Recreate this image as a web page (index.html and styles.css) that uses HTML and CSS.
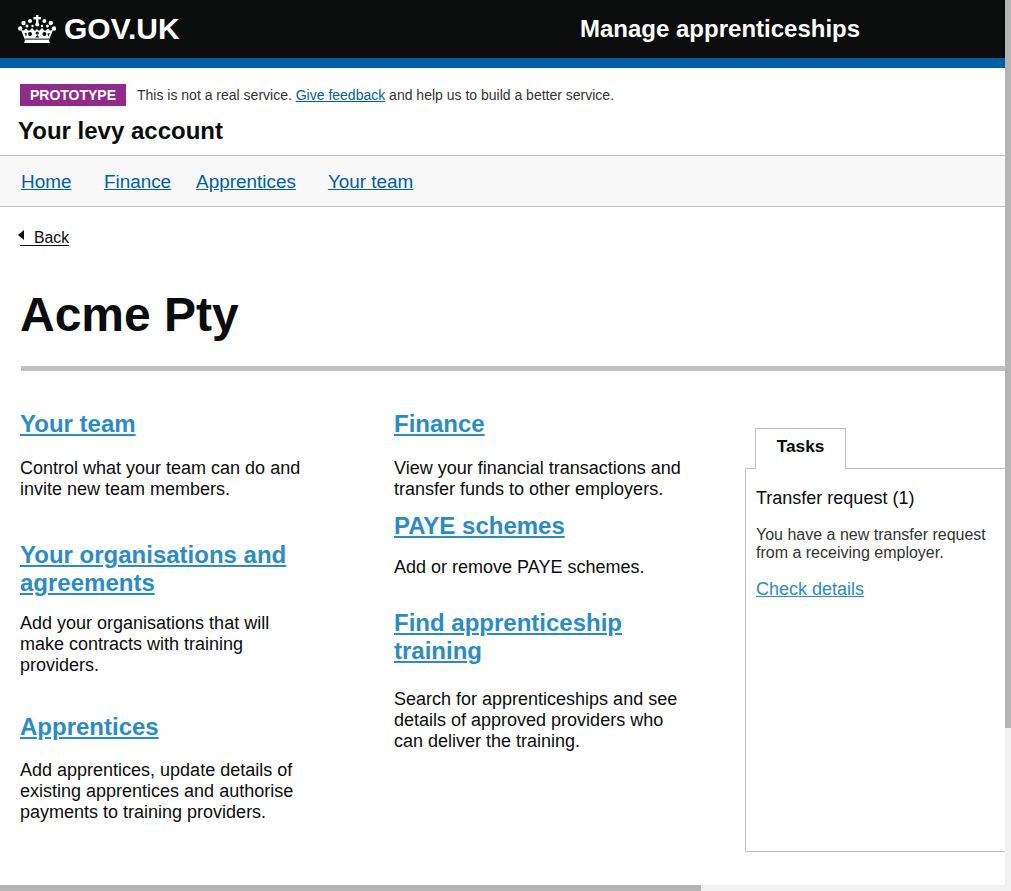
FILE: index.html
```html
<!DOCTYPE html>
<html lang="en">
<head>
<meta charset="utf-8">
<title>Acme Pty</title>
<link rel="stylesheet" href="styles.css">
</head>
<body>
<div class="window">
  <div class="viewport">
    <header class="topbar">
      <a class="logo" href="#">
        <svg class="crown" viewBox="0 0 38 28" width="38" height="28" aria-hidden="true">
          <g fill="#fff">
            <rect x="18" y="0" width="2.4" height="8"/>
            <rect x="15.5" y="2" width="7.4" height="2.4"/>
            <circle cx="19.2" cy="9.5" r="2"/>
            <circle cx="12" cy="6" r="2"/>
            <circle cx="26.4" cy="6" r="2"/>
            <circle cx="5.5" cy="8" r="2.2"/>
            <circle cx="32.8" cy="8" r="2.2"/>
            <circle cx="2.2" cy="13.5" r="2.2"/>
            <circle cx="36" cy="13.500" r="2.2"/>
            <circle cx="9" cy="11" r="1.5"/>
            <circle cx="29.4" cy="11" r="1.5"/>
            <circle cx="14.500" cy="11" r="1.2"/>
            <circle cx="24" cy="11" r="1.2"/>
            <path d="M3 15l3 0.500 2-2 3 2.500 3-3 3 3 2-2 2 2 3-3 3 3 3-2.500 2 2 3-0.500-4 10 0.800 3H6.200l0.800-3z"/>
          </g>
          <g fill="#0b0c0c">
            <circle cx="12" cy="19" r="2"/>
            <circle cx="26.400" cy="19" r="2"/>
            <circle cx="19.200" cy="18" r="1.600"/>
            <path d="M17 22.500h4.400l-2.200-2.500z"/>
            <path d="M6.500 18l2.500 0.500-1 3z"/>
            <path d="M31.900 18l-2.500 0.500 1 3z"/>
            <rect x="7" y="23.600" width="24.400" height="1"/>
          </g>
        </svg>
        <span class="logo-text">GOV.UK</span>
      </a>
      <div class="service">Manage apprenticeships</div>
    </header>
    <div class="blue-bar"></div>
    <div class="phase">
      <strong class="tag">PROTOTYPE</strong>
      <span class="phase-text">This is not a real service. <a href="#">Give feedback</a> and help us to build a better service.</span>
    </div>
    <div class="account">Your levy account</div>
    <nav class="nav">
      <a class="nav-home" href="#">Home</a>
      <a class="nav-finance" href="#">Finance</a>
      <a class="nav-apprentices" href="#">Apprentices</a>
      <a href="#">Your team</a>
    </nav>
    <a class="back" href="#"><span class="back-arrow"></span><span class="back-label">Back</span></a>
    <h1 class="title">Acme Pty</h1>
    <hr class="rule">
    <main class="columns">
      <div class="col col-one">
        <section class="item item-team">
          <h2><a href="#">Your team</a></h2>
          <p>Control what your team can do and invite new team members.</p>
        </section>
        <section class="item item-orgs">
          <h2><a href="#">Your organisations and agreements</a></h2>
          <p>Add your organisations that will make contracts with training providers.</p>
        </section>
        <section class="item item-apprentices">
          <h2><a href="#">Apprentices</a></h2>
          <p>Add apprentices, update details of existing apprentices and authorise payments to training providers.</p>
        </section>
      </div>
      <div class="col col-two">
        <section class="item item-finance">
          <h2><a href="#">Finance</a></h2>
          <p>View your financial transactions and transfer funds to other employers.</p>
        </section>
        <section class="item item-paye">
          <h2><a href="#">PAYE schemes</a></h2>
          <p>Add or remove PAYE schemes.</p>
        </section>
        <section class="item item-find">
          <h2><a href="#">Find apprenticeship training</a></h2>
          <p>Search for apprenticeships and see details of approved providers who can deliver the training.</p>
        </section>
      </div>
      <aside class="tasks">
        <div class="tab">Tasks</div>
        <div class="panel">
          <h3>Transfer request (1)</h3>
          <p>You have a new transfer request from a receiving employer.</p>
          <a href="#">Check details</a>
        </div>
      </aside>
    </main>
  </div>
  <div class="scroll-v"><div class="thumb-v"></div></div>
  <div class="scroll-h"><div class="thumb-h"></div></div>
  <div class="scroll-corner"></div>
</div>
</body>
</html>
```
FILE: styles.css
```css
* { box-sizing: border-box; }
html, body { margin: 0; padding: 0; height: 100%; overflow: hidden; background: #fff; }
body { font-family: "Liberation Sans", Arial, sans-serif; color: #0b0c0c; }
.window {
  width: 1011px; height: 891px;
  display: grid;
  grid-template-columns: 1005px 6px;
  grid-template-rows: 885px 6px;
}
.viewport { overflow: hidden; min-width: 0; min-height: 0; }
.scroll-v { background: #f1f1f1; }
.thumb-v { height: 728px; background: #b4b4b4; }
.scroll-h { background: #f1f1f1; }
.thumb-h { width: 701px; height: 6px; background: #b4b4b4; }
.scroll-corner { background: #f1f1f1; }

.topbar { height: 58px; background: #0b0c0c; display: flex; align-items: center; }
.logo { display: flex; align-items: center; margin-left: 18px; color: #fff; text-decoration: none; width: 562px; }
.crown { flex: none; }
.logo-text { margin-left: 8px; font-size: 30px; font-weight: 700; }
.service { color: #fff; font-size: 24px; font-weight: 700; }
.blue-bar { height: 10px; background: #005ea5; }

.phase { display: flex; align-items: center; margin: 16px 0 0 20px; height: 22px; }
.tag { background: #912b88; color: #fff; font-size: 14px; width: 106px; height: 22px; line-height: 23px; text-align: center; }
.phase-text { margin-left: 11px; font-size: 14px; color: #333; }
.phase-text a { color: #005ea5; }
.account { margin: 11px 0 0 18px; font-size: 24px; font-weight: 700; line-height: 28px; }

.nav { margin-top: 10px; height: 52px; background: #f8f8f8; border-top: 1px solid #bfc1c3; border-bottom: 1px solid #bfc1c3; display: flex; align-items: center; padding: 1px 0 0 21px; font-size: 18.9px; }
.nav a { color: #005ea5; }
.nav-home { margin-right: 32.5px; }
.nav-finance { margin-right: 25px; }
.nav-apprentices { margin-right: 32px; }

.back { display: flex; width: fit-content; align-items: center; margin: 23px 0 0 20px; color: #0b0c0c; font-size: 15.8px; line-height: 18px; text-decoration: none; border-bottom: 1px solid #0b0c0c; height: 16px; }
.back-arrow { width: 0; height: 0; border-style: solid; border-width: 5px 6px 5px 0; border-color: transparent #0b0c0c transparent transparent; margin: -6px 10px 0 -2px; }
.back-label { display: block; }

.title { margin: 39px 0 0 20px; font-size: 48px; line-height: 60px; font-weight: 700; }
.rule { margin: 21px 0 0 21px; height: 5px; border: 0; background: #bfc1c3; }

.columns { display: flex; padding-left: 20px; }
.col-one { width: 374px; padding-top: 39px; }
.col-two { width: 351px; padding-top: 39px; }
.col p { margin: 0; font-size: 18px; line-height: 21px; }
.col-one p { max-width: 285px; }
.col-two p { max-width: 295px; }
.item h2 { margin: 0 0 20px; max-width: 300px; font-size: 24px; line-height: 28px; font-weight: 700; }
.item h2 a { color: #2b8cc4; }
.item-team { margin-bottom: 41px; }
.item-orgs { margin-bottom: 37px; }
.item-orgs h2 { margin-bottom: 16px; }
.item-apprentices h2 { margin-bottom: 19px; }
.item-finance { margin-bottom: 12px; }
.item-paye { margin-bottom: 31px; }
.item-paye h2 { margin-bottom: 17px; }
.item-find h2 { margin-bottom: 24px; }

.tasks { margin-top: 57px; width: 260px; flex: none; display: flex; flex-direction: column; }
.tab { margin-left: 10px; width: 91px; height: 41px; line-height: 35px; text-align: center; font-size: 17.3px; font-weight: 700; background: #fff; border: 1px solid #bfc1c3; border-bottom: 0; position: relative; z-index: 1; }
.panel { height: 384px; margin-top: -1px; border: 1px solid #bfc1c3; border-right: 0; padding: 19px 10px 0; }
.panel h3 { margin: 0; font-size: 18px; line-height: 20px; font-weight: 400; }
.panel p { margin: 18px 0 0; font-size: 16px; line-height: 18px; color: #333; }
.panel a { display: inline-block; margin-top: 17px; font-size: 18px; line-height: 20px; color: #2b8cc4; }
```
